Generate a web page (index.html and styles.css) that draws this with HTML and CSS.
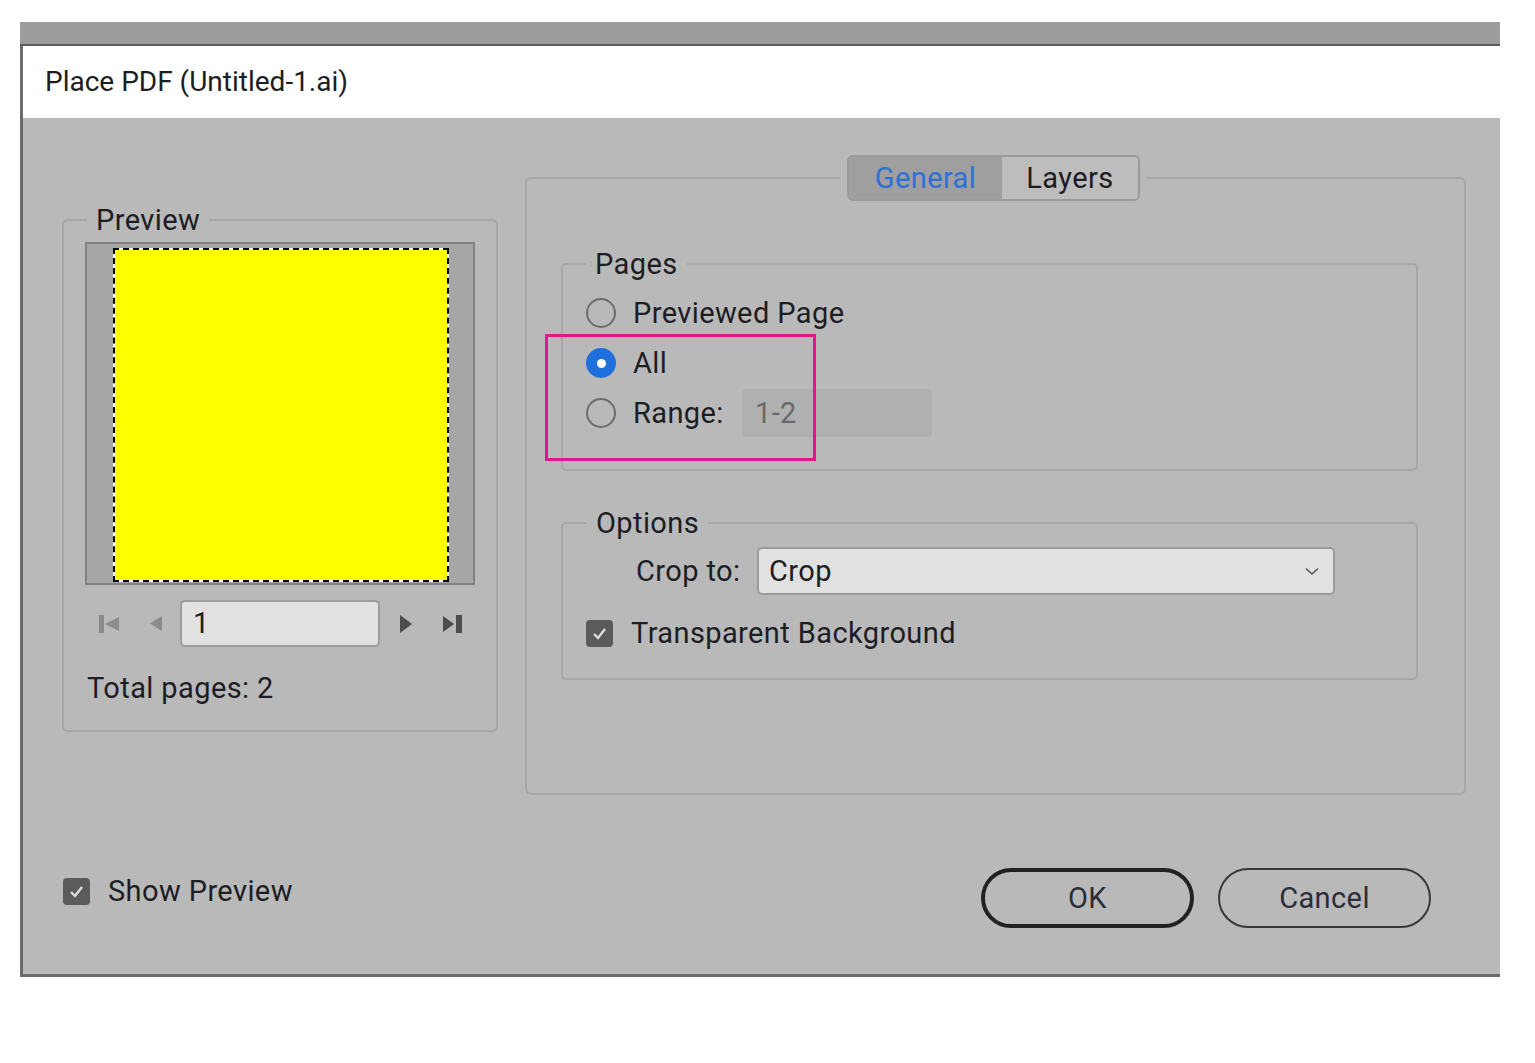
FILE: index.html
```html
<!DOCTYPE html>
<html lang="en">
<head>
  <meta charset="UTF-8">
  <meta name="viewport" content="width=device-width, initial-scale=1.0">
  <title>Place PDF</title>

  <link rel="stylesheet" href="styles.css">

</head>
<body>
  <div class="window">
    <div class="topbar"></div>
    <div class="dialog">
      <div class="titlebar">Place PDF (Untitled-1.ai)</div>

      <div class="content">
        <div class="columns">

          <!-- left: preview -->
          <fieldset class="group preview">
            <legend>Preview</legend>
            <div class="preview-box">
              <div class="page"></div>
            </div>
            <div class="nav">
              <svg class="nav-first" width="21" height="20" viewBox="0 0 21 20"><rect x="0" y="1" width="5" height="18" fill="#8b8b8b"/><path d="M20 3 L6 10 L20 17 Z" fill="#8b8b8b"/></svg>
              <svg class="nav-prev" width="12" height="15" viewBox="0 0 12 15"><path d="M12 0 L0 7.5 L12 15 Z" fill="#8b8b8b"/></svg>
              <div class="page-field">1</div>
              <svg class="nav-next" width="12" height="18" viewBox="0 0 12 18"><path d="M0 0 L12 9 L0 18 Z" fill="#4d4d4d"/></svg>
              <svg class="nav-last" width="21" height="20" viewBox="0 0 21 20"><path d="M0 2 L11 10 L0 18 Z" fill="#4d4d4d"/><rect x="13" y="1" width="6" height="18" fill="#4d4d4d"/></svg>
            </div>
            <div class="total">Total pages: 2</div>
          </fieldset>

          <!-- right: tabs -->
          <fieldset class="panel">
            <legend>
              <div class="tabs">
                <span class="tab active">General</span>
                <span class="tab">Layers</span>
              </div>
            </legend>

            <fieldset class="group pages">
              <legend>Pages</legend>
              <div class="radios">
                <div class="row"><span class="radio"></span>Previewed Page</div>
                <div class="row"><span class="radio checked"></span>All</div>
                <div class="row"><span class="radio"></span><span class="range-label">Range:</span><span class="range-field">1-2</span></div>
                <div class="highlight"></div>
              </div>
            </fieldset>

            <fieldset class="group options">
              <legend>Options</legend>
              <div class="crop-row">
                <span class="crop-label">Crop to:</span>
                <div class="select">
                  <span>Crop</span>
                  <svg width="14" height="9" viewBox="0 0 14 9"><polyline points="1,1.5 7,7 13,1.5" fill="none" stroke="#555" stroke-width="1.6"/></svg>
                </div>
              </div>
              <div class="check-row">
                <span class="checkbox"><svg width="17" height="17" viewBox="0 0 17 17"><polyline points="3,9 7,13 14,4" fill="none" stroke="#dcdcdc" stroke-width="2.4"/></svg></span>
                Transparent Background
              </div>
            </fieldset>
          </fieldset>

        </div>

        <div class="footer">
          <div class="show-preview">
            <span class="checkbox"><svg width="17" height="17" viewBox="0 0 17 17"><polyline points="3,9 7,13 14,4" fill="none" stroke="#dcdcdc" stroke-width="2.4"/></svg></span>
            Show Preview
          </div>
          <div class="buttons">
            <div class="btn btn-ok">OK</div>
            <div class="btn">Cancel</div>
          </div>
        </div>
      </div>
    </div>
  </div>
</body>
</html>
```

FILE: styles.css
```css
body{
  margin: 0;
  background-color: #ffffff;
  font-family: Roboto, "Noto Sans", sans-serif;
  font-size: 29px;
  letter-spacing: 0.4px;
  color: #1d1d24;
}

.window{
  width: 1480px;
  margin: 22px 0 0 20px;
}

.topbar{
  height: 22px;
  background-color: #9c9c9c;
  border-bottom: 2px solid #5c5c5c;
}

.dialog{
  border-left: 3px solid #6b6b6b;
  border-bottom: 3px solid #6b6b6b;
}

.titlebar{
  height: 72px;
  line-height: 72px;
  padding-left: 22px;
  font-size: 28px;
  letter-spacing: 0;
  background-color: #ffffff;
}

.content{
  height: 856px;
  box-sizing: border-box;
  background-color: #b9b9b9;
  padding: 37px 34px 0 39px;
}

.columns{
  display: grid;
  grid-template-columns: 436px 941px;
  column-gap: 27px;
  align-items: start;
}

fieldset{
  margin: 0;
  padding: 0;
  min-width: 0;
}

.group{
  border: 2px solid #a7a7a7;
  border-radius: 5px;
}

.group legend{
  padding: 0 9px;
  line-height: 32px;
}

/* preview */
.preview{
  margin-top: 49px;
  padding: 6px 21px 26px;
}

.preview legend{
  margin-left: 2px;
}

.preview-box{
  height: 343px;
  box-sizing: border-box;
  border: 2px solid #828282;
  background-color: #a6a6a6;
  padding: 4px 0 0 26px;
}

.page{
  width: 336px;
  height: 334px;
  box-sizing: border-box;
  border: 2px dashed #000000;
  background: linear-gradient(#ffff00, #ffff00) padding-box, linear-gradient(#ffffff, #ffffff) border-box;
}

.nav{
  display: flex;
  align-items: center;
  margin-top: 15px;
  height: 47px;
}

.nav-first{ margin-left: 14px; }
.nav-prev{ margin-left: 30px; }
.nav-next{ margin-left: 20px; }
.nav-last{ margin-left: 31px; }

.page-field{
  margin-left: 18px;
  width: 200px;
  height: 47px;
  box-sizing: border-box;
  border: 2px solid #9c9c9c;
  border-radius: 5px;
  background-color: #e1e1e1;
  padding-left: 11px;
  line-height: 43px;
}

.total{
  margin: 25px 0 0 2px;
  line-height: 32px;
}

/* tab panel */
.panel{
  border: 2px solid #a7a7a7;
  border-radius: 6px;
  padding: 47px 46px 113px 34px;
}

.panel > legend{
  margin-left: 279px;
  padding: 0 7px;
}

.tabs{
  display: flex;
  border: 2px solid #9a9a9a;
  border-radius: 6px;
  overflow: hidden;
}

.tab{
  width: 136px;
  height: 42px;
  line-height: 42px;
  text-align: center;
  background-color: #bdbdbd;
}

.tab.active{
  width: 153px;
  background-color: #9f9f9f;
  color: #2d70d6;
}

.pages{
  padding: 8px 0 31px 23px;
}

.radios{
  position: relative;
}

.row{
  display: flex;
  align-items: center;
  height: 50px;
}

.radio{
  width: 30px;
  height: 30px;
  box-sizing: border-box;
  border: 2px solid #6c6c6c;
  border-radius: 50%;
  margin-right: 17px;
  display: flex;
  align-items: center;
  justify-content: center;
}

.radio.checked{
  background-color: #1f6fdc;
  border-color: #1f6fdc;
}

.radio.checked::after{
  content: "";
  width: 9px;
  height: 9px;
  border-radius: 50%;
  background-color: #ffffff;
}

.range-label{
  width: 109px;
}

.range-field{
  width: 190px;
  height: 48px;
  line-height: 48px;
  box-sizing: border-box;
  padding-left: 13px;
  border-radius: 4px;
  background-color: #b0b0b0;
  color: #6a6a6a;
}

/* pink annotation box */
.highlight{
  position: absolute;
  left: -41px;
  top: 46px;
  width: 271px;
  height: 127px;
  box-sizing: border-box;
  border: 3px solid #e3168b;
}

.options{
  margin-top: 36px;
  padding: 8px 0 27px 23px;
}

.options legend{
  margin-left: 1px;
}

.crop-row{
  display: flex;
  align-items: center;
}

.crop-label{
  margin-left: 50px;
  width: 121px;
}

.select{
  width: 578px;
  height: 48px;
  box-sizing: border-box;
  border: 2px solid #9b9b9b;
  border-radius: 5px;
  background-color: #e1e1e1;
  padding: 0 14px 0 10px;
  display: flex;
  align-items: center;
  justify-content: space-between;
}

.check-row{
  display: flex;
  align-items: center;
  margin-top: 20px;
  height: 36px;
}

.checkbox{
  width: 27px;
  height: 27px;
  border-radius: 4px;
  background-color: #5b5b5b;
  margin-right: 18px;
  display: flex;
  align-items: center;
  justify-content: center;
}

/* bottom */
.footer{
  display: flex;
  justify-content: space-between;
  align-items: flex-start;
  margin: 73px 35px 0 1px;
}

.show-preview{
  display: flex;
  align-items: center;
  height: 28px;
  margin-top: 9px;
}

.buttons{
  display: flex;
  gap: 24px;
}

.btn{
  width: 213px;
  height: 60px;
  box-sizing: border-box;
  border: 2px solid #383838;
  border-radius: 30px;
  display: flex;
  align-items: center;
  justify-content: center;
  color: #2a2d3a;
}

.btn-ok{
  border: 4px solid #222222;
}
```
